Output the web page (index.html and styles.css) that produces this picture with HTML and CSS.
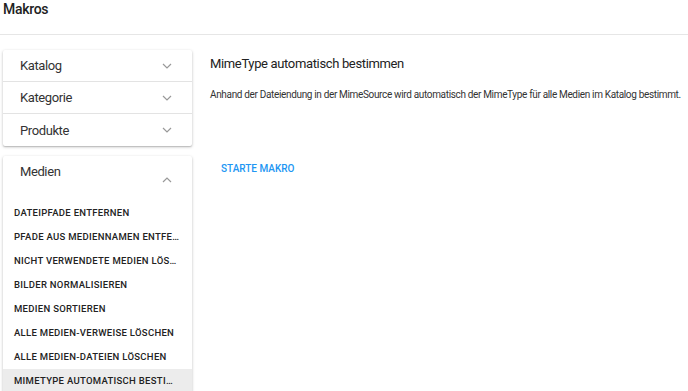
FILE: index.html
```html
<!DOCTYPE html>
<html lang="de">
<head>
    <meta charset="UTF-8">
    <title>Makros</title>
    <link rel="stylesheet" href="styles.css">
</head>
<body>
    <header class="pagehead">
        <h1>Makros</h1>
    </header>
    <div class="layout">
        <aside class="sidebar">
            <div class="panelgroup">
                <div class="panelrow">
                    <span>Katalog</span>
                    <svg class="chev" width="10" height="6" viewBox="0 0 10 6"><path d="M1 1l4 4 4-4" fill="none" stroke="#999" stroke-width="1.2"/></svg>
                </div>
                <div class="panelrow">
                    <span>Kategorie</span>
                    <svg class="chev" width="10" height="6" viewBox="0 0 10 6"><path d="M1 1l4 4 4-4" fill="none" stroke="#999" stroke-width="1.2"/></svg>
                </div>
                <div class="panelrow last">
                    <span>Produkte</span>
                    <svg class="chev" width="10" height="6" viewBox="0 0 10 6"><path d="M1 1l4 4 4-4" fill="none" stroke="#999" stroke-width="1.2"/></svg>
                </div>
            </div>
            <div class="panelgroup open">
                <div class="openhead">
                    <span>Medien</span>
                    <svg class="chev up" width="10" height="6" viewBox="0 0 10 6"><path d="M1 5l4-4 4 4" fill="none" stroke="#999" stroke-width="1.2"/></svg>
                </div>
                <ul class="macrolist">
                    <li>Dateipfade entfernen</li>
                    <li>Pfade aus Mediennamen entfernen</li>
                    <li>Nicht verwendete Medien löschen</li>
                    <li>Bilder normalisieren</li>
                    <li>Medien sortieren</li>
                    <li>Alle Medien-Verweise löschen</li>
                    <li>Alle Medien-Dateien löschen</li>
                    <li class="active">MimeType automatisch bestimmen</li>
                </ul>
            </div>
        </aside>
        <main class="content">
            <h2>MimeType automatisch bestimmen</h2>
            <p>Anhand der Dateiendung in der MimeSource wird automatisch der MimeType für alle Medien im Katalog bestimmt.</p>
            <button class="runbtn">Starte Makro</button>
        </main>
    </div>
</body>
</html>
```
FILE: styles.css
```css
* {
    margin: 0;
    padding: 0;
    box-sizing: border-box;
}
body {
    font-family: Roboto, "Liberation Sans", sans-serif;
    color: #333;
    background: #fff;
    width: 688px;
    height: 391px;
    overflow: hidden;
}
.pagehead {
    height: 35px;
    border-bottom: 1px solid #e6e6e6;
    padding: 0 3px;
}
.pagehead h1 {
    font-size: 14px;
    font-weight: 500;
    letter-spacing: -0.3px;
    line-height: 18px;
    color: #222;
}
.layout {
    display: flex;
    padding-top: 15px;
}
.sidebar {
    width: 189px;
    margin-left: 3px;
}
.panelgroup {
    background: #fff;
    border-radius: 2px;
    box-shadow: 0 1px 3px rgba(0, 0, 0, 0.25), 0 1px 1px rgba(0, 0, 0, 0.1);
}
.panelrow {
    height: 32px;
    display: flex;
    align-items: center;
    justify-content: space-between;
    padding: 0 20px 0 17px;
    border-bottom: 1px solid #e3e3e3;
    font-size: 13px;
    letter-spacing: -0.4px;
}
.panelrow.last {
    border-bottom: none;
}
.chev {
    display: block;
}
.panelgroup.open {
    margin-top: 10px;
    border-radius: 2px 2px 0 0;
}
.openhead {
    height: 45px;
    display: flex;
    justify-content: space-between;
    padding: 8px 20px 0 17px;
    font-size: 13px;
    letter-spacing: -0.4px;
}
.openhead .up {
    margin-top: 13px;
}
.macrolist {
    list-style: none;
}
.macrolist li {
    height: 24px;
    line-height: 24px;
    padding: 0 11px;
    font-size: 9.5px;
    font-weight: 500;
    letter-spacing: 0.3px;
    text-transform: uppercase;
    color: #222;
    white-space: nowrap;
    overflow: hidden;
    text-overflow: ellipsis;
}
.macrolist li.active {
    background: #ececec;
}
.content {
    margin-left: 18px;
    padding-top: 5px;
}
.content h2 {
    font-size: 13px;
    font-weight: 400;
    letter-spacing: -0.35px;
    color: #222;
    line-height: 18px;
}
.content p {
    margin-top: 15px;
    font-size: 10px;
    letter-spacing: -0.34px;
    line-height: 14px;
    color: #333;
    white-space: nowrap;
}
.runbtn {
    margin-top: 48px;
    background: none;
    border: none;
    font-family: inherit;
    font-size: 10px;
    font-weight: 500;
    letter-spacing: 0;
    text-transform: uppercase;
    color: #2196f3;
    padding: 0 11px;
    height: 36px;
    cursor: pointer;
}
```
